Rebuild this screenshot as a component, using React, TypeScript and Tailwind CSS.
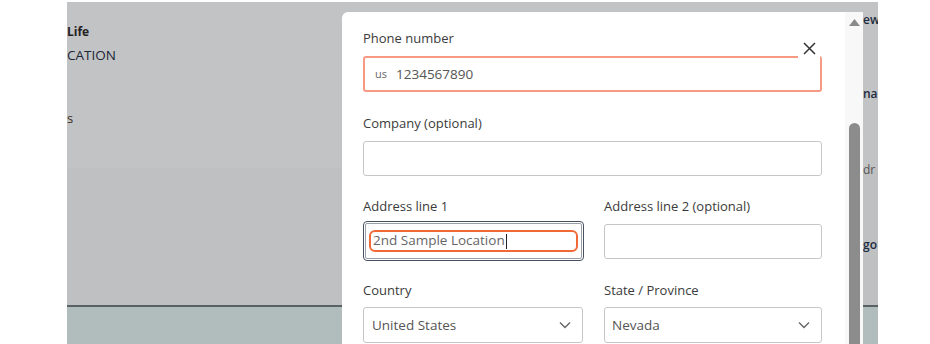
import React from "react";

const font = { fontFamily: '"Open Sans", "Liberation Sans", sans-serif' };

function Label({ children }: { children: React.ReactNode }) {
  return <div className="text-[13px] leading-[18px] text-[#3b3b3b]">{children}</div>;
}

function Chevron() {
  return (
    <svg width="12" height="8" viewBox="0 0 12 8" className="shrink-0">
      <path d="M1 1.5 L6 6.5 L11 1.5" fill="none" stroke="#666" strokeWidth="1.4" />
    </svg>
  );
}

export default function App() {
  return (
    <div className="relative w-[930px] h-[344px] bg-white overflow-hidden" style={font}>
      {/* dimmed page behind */}
      <div className="ml-[67px] mt-[2px] w-[811px] h-[342px] overflow-hidden flex flex-col">
        <div className="h-[166px] bg-[#c2c3c4] flex">
          <div className="pt-[21px] flex flex-col flex-1">
            <div className="text-[12px] leading-[18px] font-bold text-[#222]">Life</div>
            <div className="mt-[5px] text-[13.5px] leading-[18px] text-[#1c2636]">CATION</div>
            <div className="mt-[45px] text-[13px] leading-[18px] text-[#3a2e22]">s</div>
          </div>
          <div className="w-[15px] shrink-0 flex flex-col pt-[9px] text-[12px] leading-[18px] font-semibold text-[#1d2b3e] whitespace-nowrap">
            <div>ew</div>
            <div className="mt-[56px]">na</div>
          </div>
        </div>
        <div className="h-[137px] bg-[#bfc0c1] flex">
          <div className="flex-1" />
          <div className="w-[15px] shrink-0 flex flex-col text-[12px] leading-[18px] whitespace-nowrap">
            <div className="mt-[-7px] text-[#555]">dr</div>
            <div className="mt-[57px] font-semibold text-[#1d2b3e]">go</div>
          </div>
        </div>
        <div className="h-[2px] bg-[#596163]" />
        <div className="flex-1 bg-[#b1bcbc]" />
      </div>

      {/* modal */}
      <div className="absolute left-[342px] top-[12px] w-[521px] h-[340px] bg-white rounded-t-[6px] flex">
        <div className="relative flex-1 pl-[21px] pr-[23px] pt-[17px]">
          <button className="absolute left-[456px] top-[25px] w-[22px] h-[22px] bg-white flex items-center justify-center">
            <svg width="13" height="13" viewBox="0 0 13 13">
              <path d="M1 1 L12 12 M12 1 L1 12" stroke="#333" strokeWidth="1.5" />
            </svg>
          </button>

          <Label>Phone number</Label>
          <div className="mt-[9px] h-[36px] rounded-[3px] border-2 border-[#f79a84] flex items-center pl-[10px]">
            <span className="text-[11px] text-[#666]">us</span>
            <span className="ml-[9px] text-[13.5px] text-[#555]">1234567890</span>
          </div>

          <div className="mt-[22px]">
            <Label>Company (optional)</Label>
          </div>
          <div className="mt-[9px] h-[35px] rounded-[3px] border border-[#c6c6c6]" />

          <div className="mt-[21px] flex gap-[20px]">
            <div className="w-[221px]">
              <Label>Address line 1</Label>
              <div className="mt-[6px] h-[40px] rounded-[4px] border-[1.5px] border-[#4a5262] p-[1px]">
                <div className="h-full rounded-[2px] border border-[#9aa0a8] flex items-center px-[3px]">
                  <div className="w-full h-[22px] rounded-[6px] border-[2.5px] border-[#f06a38] flex items-center pl-[2px]">
                    <span className="text-[13.5px] text-[#666] leading-none">2nd Sample Location</span>
                    <span className="ml-[1px] w-[1px] h-[15px] bg-[#222]" />
                  </div>
                </div>
              </div>
            </div>
            <div className="w-[218px]">
              <Label>Address line 2 (optional)</Label>
              <div className="mt-[9px] h-[35px] rounded-[3px] border border-[#c6c6c6]" />
            </div>
          </div>

          <div className="mt-[20px] flex gap-[21px]">
            <div className="w-[220px]">
              <Label>Country</Label>
              <div className="mt-[8px] h-[36px] rounded-[3px] border border-[#c6c6c6] flex items-center justify-between pl-[8px] pr-[11px]">
                <span className="text-[13.5px] text-[#555]">United States</span>
                <Chevron />
              </div>
            </div>
            <div className="w-[218px]">
              <Label>State / Province</Label>
              <div className="mt-[8px] h-[36px] rounded-[3px] border border-[#c6c6c6] flex items-center justify-between pl-[7px] pr-[11px]">
                <span className="text-[13.5px] text-[#555]">Nevada</span>
                <Chevron />
              </div>
            </div>
          </div>
        </div>

        {/* scrollbar */}
        <div className="w-[18px] bg-[#f8f8f8] flex flex-col items-center pt-[7px]">
          <svg width="11" height="7" viewBox="0 0 11 7">
            <path d="M5.5 0 L11 7 L0 7 Z" fill="#8a8a8a" />
          </svg>
          <div className="mt-[97px] w-[11px] flex-1 bg-[#8c8c8c] rounded-t-full" />
        </div>
      </div>
    </div>
  );
}
